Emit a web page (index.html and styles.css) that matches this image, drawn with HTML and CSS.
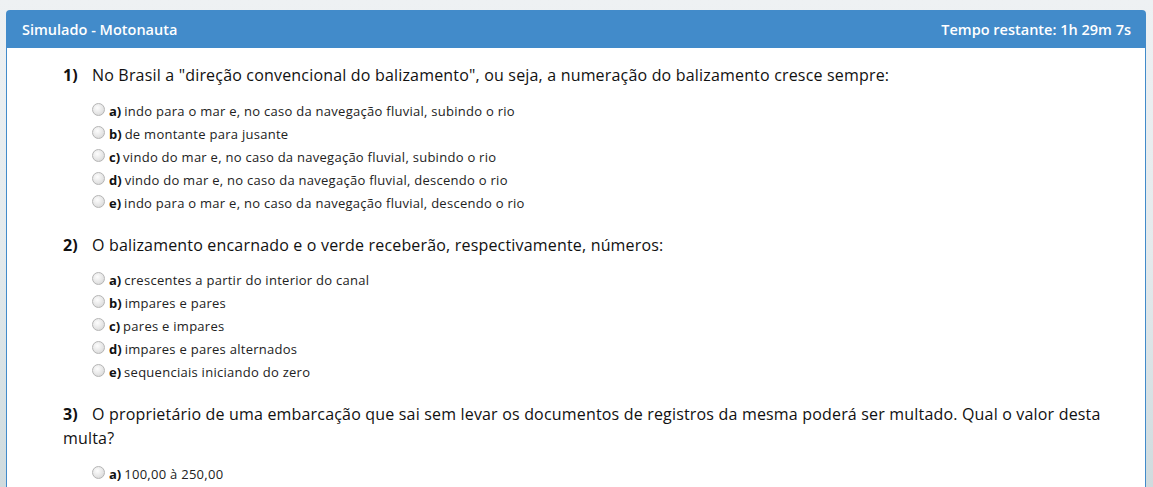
FILE: index.html
```html
<!DOCTYPE html>
<html lang="pt">
<head>
<meta charset="utf-8">
<title>Simulado - Motonauta</title>
<link rel="stylesheet" href="styles.css">
</head>
<body>
<div class="page">
  <div class="panel">
    <div class="panel-heading">
      <span class="title">Simulado - Motonauta</span>
      <span class="timer">Tempo restante: 1h 29m 7s</span>
    </div>
    <div class="panel-body">
      <div class="question">
        <div class="q-text"><b class="num">1)</b><span>No Brasil a "direção convencional do balizamento", ou seja, a numeração do balizamento cresce sempre:</span></div>
        <ul class="options">
          <li><span class="radio"></span><b>a)</b> indo para o mar e, no caso da navegação fluvial, subindo o rio</li>
          <li><span class="radio"></span><b>b)</b> de montante para jusante</li>
          <li><span class="radio"></span><b>c)</b> vindo do mar e, no caso da navegação fluvial, subindo o rio</li>
          <li><span class="radio"></span><b>d)</b> vindo do mar e, no caso da navegação fluvial, descendo o rio</li>
          <li><span class="radio"></span><b>e)</b> indo para o mar e, no caso da navegação fluvial, descendo o rio</li>
        </ul>
      </div>
      <div class="question q-short">
        <div class="q-text"><b class="num">2)</b><span>O balizamento encarnado e o verde receberão, respectivamente, números:</span></div>
        <ul class="options">
          <li><span class="radio"></span><b>a)</b> crescentes a partir do interior do canal</li>
          <li><span class="radio"></span><b>b)</b> impares e pares</li>
          <li><span class="radio"></span><b>c)</b> pares e impares</li>
          <li><span class="radio"></span><b>d)</b> impares e pares alternados</li>
          <li><span class="radio"></span><b>e)</b> sequenciais iniciando do zero</li>
        </ul>
      </div>
      <div class="question">
        <div class="q-text wrap"><b class="num">3)</b><span>O proprietário de uma embarcação que sai sem levar os documentos de registros da mesma poderá ser multado. Qual o valor desta multa?</span></div>
        <ul class="options">
          <li><span class="radio"></span><b>a)</b> 100,00 à 250,00</li>
        </ul>
      </div>
    </div>
  </div>
</div>
</body>
</html>
```
FILE: styles.css
```css
html, body {
  margin: 0;
  padding: 0;
}
body {
  background: linear-gradient(#eef1f3 0px, #e4eaec 250px, #cfdbde 487px);
  height: 487px;
  overflow: hidden;
  font-family: "Open Sans", "DejaVu Sans", sans-serif;
  color: #111;
}
.page {
  padding: 10px 7px 0 6px;
}
.panel {
  background: #fff;
  border: 1px solid #428bca;
  border-bottom: none;
  border-radius: 4px 4px 0 0;
  height: 477px;
}
.panel-heading {
  background: #428bca;
  color: #fff;
  height: 37px;
  display: flex;
  align-items: center;
  justify-content: space-between;
  padding: 0 14px 0 15px;
  font-size: 14.5px;
  font-weight: 600;
}
.panel-body {
  padding: 15px 18px 0 56px;
}
.q-text {
  display: flex;
  font-size: 16px;
  letter-spacing: 0.18px;
  line-height: 24px;
  margin-bottom: 13px;
  color: #111;
}
.q-short .q-text {
  margin-bottom: 12px;
}
.q-text.wrap {
  display: block;
}
.q-text .num {
  width: 29px;
  flex: none;
  letter-spacing: 0;
}
.q-text.wrap .num {
  display: inline-block;
  width: 29px;
}
.options {
  list-style: none;
  margin: 0 0 18px 29px;
  padding: 0;
}
.options li {
  font-size: 13px;
  letter-spacing: 0.27px;
  line-height: 23px;
  color: #222;
  display: flex;
  align-items: center;
}
.options li b {
  color: #111;
  margin-right: 3px;
  letter-spacing: 0;
}
.radio {
  width: 11px;
  height: 11px;
  border-radius: 50%;
  border: 1px solid #b5b5b5;
  background: radial-gradient(circle at 40% 35%, #fdfdfd 0, #e6e6e6 55%, #d0d0d0 100%);
  margin-right: 4px;
  margin-top: -4px;
  flex: none;
}
```
